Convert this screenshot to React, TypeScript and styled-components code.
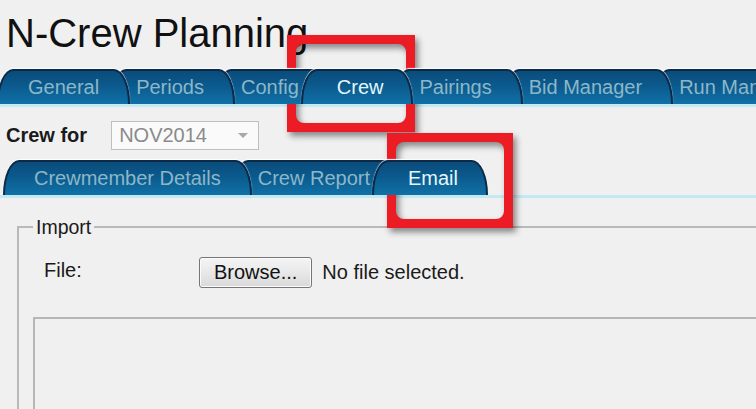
import React from 'react';
import styled, {createGlobalStyle} from 'styled-components';

const GlobalStyle = createGlobalStyle`
  html, body {
    margin: 0;
    padding: 0;
    background: #f0f0f0;
    overflow: hidden;
  }
  body {
    font-family: "Liberation Sans", Arial, sans-serif;
  }
`;

const Page = styled.div`
  position: relative;
  width: 756px;
  height: 409px;
  overflow: hidden;
  background: #f0f0f0;
  color: #151515;
`;

const Title = styled.h1`
  margin: 13px 0 0 6px;
  font-size: 40px;
  line-height: 40px;
  font-weight: normal;
  color: #111;
  white-space: nowrap;
`;

const TabBar = styled.div<{ $top: number; $lead: number }>`
  display: flex;
  align-items: flex-end;
  height: 38px;
  box-sizing: border-box;
  margin-top: ${p => p.$top}px;
  border-bottom: 3px solid #c3eaf3;
  white-space: nowrap;

  & > :first-child {
    margin-left: ${p => p.$lead}px;
    padding-left: 29px;
  }
`;

const Tab = styled.div<{ $active?: boolean; $z: number }>`
  flex-shrink: 0;
  z-index: ${p => (p.$active ? 50 : p.$z)};
  height: 35px;
  box-sizing: border-box;
  margin-left: ${p => (p.$active ? '-29px' : '-20px')};
  padding: ${p => (p.$active ? '0 28px 0 34px' : '0 29px 0 24px')};
  border: 2px solid #0a2a47;
  border-bottom: 0;
  border-radius: 16px 16px 0 0 / 35px 35px 0 0;
  background: linear-gradient(180deg, #0a4c7b 0%, #0b5a8d 45%, #1071a7 100%);
  box-shadow: 0 -1px 1px rgba(255, 255, 255, 0.95);
  font-size: 20px;
  line-height: 33px;
  color: ${p => (p.$active ? '#e3f6fb' : '#8cb7c8')};
`;

const CrewRow = styled.div`
  display: flex;
  align-items: center;
  gap: 24px;
  margin: 14px 0 0 6px;
`;

const Label = styled.span`
  font-size: 20px;
  font-weight: bold;
  color: #1a1a1a;
`;

const Select = styled.div`
  display: flex;
  align-items: center;
  justify-content: space-between;
  width: 148px;
  height: 29px;
  box-sizing: border-box;
  padding: 0 10px 0 7px;
  border: 1px solid #bfbfbf;
  background: #fafafa;
  font-size: 20px;
  color: #8a8a8a;
`;

const Caret = styled.span`
  width: 0;
  height: 0;
  border-left: 5px solid transparent;
  border-right: 5px solid transparent;
  border-top: 5px solid #a8a8a8;
`;

const ImportSet = styled.fieldset`
  margin: 19px 0 0 17px;
  padding: 0 0 0 14px;
  width: 900px;
  height: 400px;
  box-sizing: border-box;
  border: 2px solid #b9b9b9;
`;

const Legend = styled.legend`
  padding: 0 3px;
  font-size: 19.5px;
  line-height: 20px;
  color: #1a1a1a;
`;

const FileRow = styled.div`
  display: flex;
  align-items: center;
  margin: 20px 0 0 11px;
  font-size: 20px;
  color: #1a1a1a;
`;

const FileLabel = styled.span`
  width: 155px;
  margin-top: -4px;
`;

const Browse = styled.button`
  height: 31px;
  padding: 0 14px;
  border: 1px solid #767676;
  border-radius: 3px;
  background: linear-gradient(180deg, #f5f5f5 0%, #e8e8e8 50%, #d9d9d9 100%);
  box-shadow: inset 0 0 0 1px #fbfbfb;
  font-family: inherit;
  font-size: 20px;
  color: #111;
`;

const NoFile = styled.span`
  margin-left: 10px;
`;

const ListBox = styled.div`
  margin-top: 29px;
  width: 900px;
  height: 200px;
  border: 2px solid #b6b6b6;
`;

const Callout = styled.svg<{ $x: number; $y: number }>`
  position: absolute;
  left: ${p => p.$x}px;
  top: ${p => p.$y}px;
  overflow: visible;
  filter: drop-shadow(3px 4px 3px rgba(0, 0, 0, 0.45));
  pointer-events: none;
`;

function RedBox({x, y, w, h}: { x: number; y: number; w: number; h: number }) {
    const t = 9;
    const r = 8;
    const d = `M0 0H${w}V${h}H0Z ` +
        `M${t + r} ${t}H${w - t - r}A${r} ${r} 0 0 1 ${w - t} ${t + r}` +
        `V${h - t - r}A${r} ${r} 0 0 1 ${w - t - r} ${h - t}` +
        `H${t + r}A${r} ${r} 0 0 1 ${t} ${h - t - r}` +
        `V${t + r}A${r} ${r} 0 0 1 ${t + r} ${t}Z`;
    return (
        <Callout $x={x} $y={y} width={w} height={h} viewBox={`0 0 ${w} ${h}`}>
            <path d={d} fill="#ec1c24" fillRule="evenodd"/>
        </Callout>
    );
}

const mainTabs = ['General', 'Periods', 'Config', 'Crew', 'Pairings', 'Bid Manager', 'Run Manager'];
const crewTabs = ['Crewmember Details', 'Crew Report', 'Email'];

function App() {
    return (
        <Page>
            <GlobalStyle/>
            <Title>N-Crew Planning</Title>
            <TabBar $top={16} $lead={-3}>
                {mainTabs.map((t, i) => (
                    <Tab key={t} $z={20 - i} $active={t === 'Crew'}>{t}</Tab>
                ))}
            </TabBar>
            <CrewRow>
                <Label>Crew for</Label>
                <Select>
                    NOV2014
                    <Caret/>
                </Select>
            </CrewRow>
            <TabBar $top={10} $lead={3}>
                {crewTabs.map((t, i) => (
                    <Tab key={t} $z={20 - i} $active={t === 'Email'}>{t}</Tab>
                ))}
            </TabBar>
            <ImportSet>
                <Legend>Import</Legend>
                <FileRow>
                    <FileLabel>File:</FileLabel>
                    <Browse type="button">Browse...</Browse>
                    <NoFile>No file selected.</NoFile>
                </FileRow>
                <ListBox/>
            </ImportSet>
            <RedBox x={287} y={35} w={128} h={97}/>
            <RedBox x={387} y={133} w={126} h={95}/>
        </Page>
    );
}

export default App;
